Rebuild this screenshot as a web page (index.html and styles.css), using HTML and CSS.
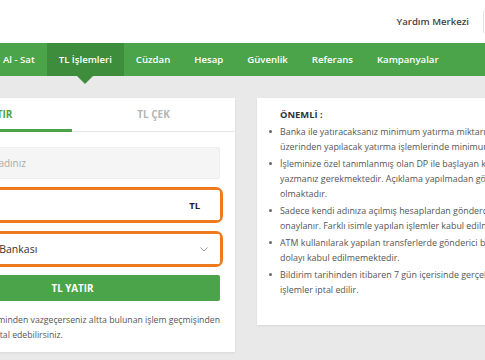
FILE: index.html
```html
<!DOCTYPE html>
<html lang="tr">
<head>
  <meta charset="UTF-8">
  <title>TL İşlemleri</title>
  <link rel="stylesheet" href="styles.css">
</head>
<body>

  <div class="header">
    <a class="help-link">Yardım Merkezi</a>
    <span class="header-sep"></span>
  </div>

  <div class="nav">
    <div class="nav-inner">
      <a>Al - Sat</a>
      <a class="active">TL İşlemleri</a>
      <a>Cüzdan</a>
      <a>Hesap</a>
      <a>Güvenlik</a>
      <a>Referans</a>
      <a>Kampanyalar</a>
    </div>
  </div>

  <div class="main">
    <!-- Yatırma formu -->
    <div class="card form-card">
      <div class="form-tabs">
        <div class="form-tab active">TL YATIR</div>
        <div class="form-tab">TL ÇEK</div>
      </div>
      <div class="form-body">
        <div class="field name-field">Adınız Soyadınız</div>
        <div class="hl">
          <div class="field amount-field"><span></span><b>TL</b></div>
        </div>
        <div class="hl">
          <div class="field bank-field">
            <span>Türkiye İş Bankası</span>
            <svg width="8" height="5" viewBox="0 0 8 5"><path d="M0.5 0.5 L4 4 L7.5 0.5" fill="none" stroke="#999" stroke-width="1"/></svg>
          </div>
        </div>
        <button class="submit">TL YATIR</button>
        <p class="note">Para yatırma işleminden vazgeçerseniz altta bulunan işlem geçmişinden<br>işlem talebinizi iptal edebilirsiniz.</p>
      </div>
    </div>

    <!-- Önemli bilgiler -->
    <div class="card info-card">
      <h4>ÖNEMLİ :</h4>
      <ul>
        <li>Banka ile yatıracaksanız minimum yatırma miktarı 10 TL, ATM<br>üzerinden yapılacak yatırma işlemlerinde minimum 50 TL'dir.</li>
        <li>İşleminize özel tanımlanmış olan DP ile başlayan kodu açıklamaya<br>yazmanız gerekmektedir. Açıklama yapılmadan gönderilen transferler iade<br>olmaktadır.</li>
        <li>Sadece kendi adınıza açılmış hesaplardan gönderdiğiniz transferler<br>onaylanır. Farklı isimle yapılan işlemler kabul edilmemektedir.</li>
        <li>ATM kullanılarak yapılan transferlerde gönderici bilgisi olmadığından<br>dolayı kabul edilmemektedir.</li>
        <li>Bildirim tarihinden itibaren 7 gün içerisinde gerçekleşmeyen<br>işlemler iptal edilir.</li>
      </ul>
    </div>
  </div>

</body>
</html>
```

FILE: styles.css
```css
body {
  font-family: "Open Sans", Arial, sans-serif;
  margin: 0;
  padding: 0;
  background-color: #e9e9e9;
  height: 360px;
  overflow: hidden;
  color: #555;
}

.header {
  background-color: #fff;
  height: 43px;
  display: flex;
  align-items: center;
  justify-content: flex-end;
}

.help-link {
  font-size: 9.6px;
  font-weight: 600;
  color: #444;
  margin-right: 14px;
}

.header-sep {
  width: 1px;
  height: 22px;
  background-color: #e2e2e2;
  margin-right: 1px;
}

.nav {
  background-color: #4ca44a;
  height: 33px;
}

.nav-inner {
  display: flex;
  height: 100%;
  margin-left: -9px;
}

.nav a {
  display: flex;
  align-items: center;
  padding: 0 12px;
  color: #fff;
  font-size: 9.6px;
  font-weight: 600;
  position: relative;
}

.nav a.active {
  background-color: #3e8d3c;
}

/* aktif sekme altındaki ok */
.nav a.active::after {
  content: "";
  position: absolute;
  left: 50%;
  top: 100%;
  margin-left: -8px;
  border-left: 8px solid transparent;
  border-right: 8px solid transparent;
  border-top: 8px solid #3e8d3c;
}

.main {
  display: flex;
  align-items: flex-start;
  gap: 22px;
  padding-top: 22px;
  margin-left: -90px;
}

.card {
  background-color: #fff;
  box-shadow: 0 1px 2px rgba(0, 0, 0, 0.08);
}

.form-card {
  width: 325px;
  flex-shrink: 0;
  height: 254px;
}

.form-tabs {
  display: flex;
  border-bottom: 1px solid #e6e6e6;
}

.form-tab {
  height: 31px;
  display: flex;
  align-items: center;
  justify-content: center;
  font-size: 10px;
  font-weight: 700;
  color: #b5b5b5;
  border-bottom: 3px solid transparent;
  margin-bottom: -1px;
}

.form-tab:first-child {
  width: 162px;
}

.form-tab:last-child {
  flex: 1;
}

.form-tab.active {
  color: #4ca44a;
  border-bottom-color: #4ca44a;
}

.form-body {
  padding: 15px 15px 0;
}

.field {
  height: 30px;
  box-sizing: border-box;
  display: flex;
  align-items: center;
  justify-content: space-between;
  font-size: 9.5px;
  border-radius: 2px;
}

.name-field {
  height: 32px;
  background-color: #f5f5f5;
  border: 1px solid #eeeeee;
  color: #aaa;
  font-size: 10px;
  padding-left: 25px;
  margin-bottom: 8px;
}

.hl {
  border: 3px solid #ee7a1f;
  border-radius: 7px;
  margin: 0 -3px 8px;
}

.amount-field {
  background-color: #fff;
  padding: 0 20px 0 10px;
}

.amount-field b {
  color: #222;
  font-size: 9.5px;
}

.bank-field {
  background-color: #fff;
  color: #333;
  font-size: 10.5px;
  padding: 0 12px 0 25px;
}

.submit {
  display: block;
  width: 100%;
  height: 26px;
  margin-top: 0;
  border: none;
  border-radius: 2px;
  background-color: #4ca44a;
  color: #fff;
  font-family: inherit;
  font-size: 9.8px;
  font-weight: 700;
}

.note {
  margin: 12px 0 0;
  padding-left: 5px;
  font-size: 8.7px;
  line-height: 15px;
  color: #555;
  white-space: nowrap;
}

.info-card {
  width: 300px;
  flex-shrink: 0;
  height: 227px;
  padding: 9px 0 0 23px;
  box-sizing: border-box;
}

.info-card h4 {
  margin: 0 0 2px;
  font-size: 9.4px;
  font-weight: 700;
  color: #333;
  line-height: 15px;
}

.info-card ul {
  margin: 0;
  padding: 0;
  list-style: none;
}

.info-card li {
  position: relative;
  font-size: 8.9px;
  line-height: 15px;
  color: #555;
  white-space: nowrap;
  margin-bottom: 2px;
}

.info-card li::before {
  content: "";
  position: absolute;
  left: -11px;
  top: 6px;
  width: 3px;
  height: 3px;
  border-radius: 50%;
  background-color: #666;
}
```
